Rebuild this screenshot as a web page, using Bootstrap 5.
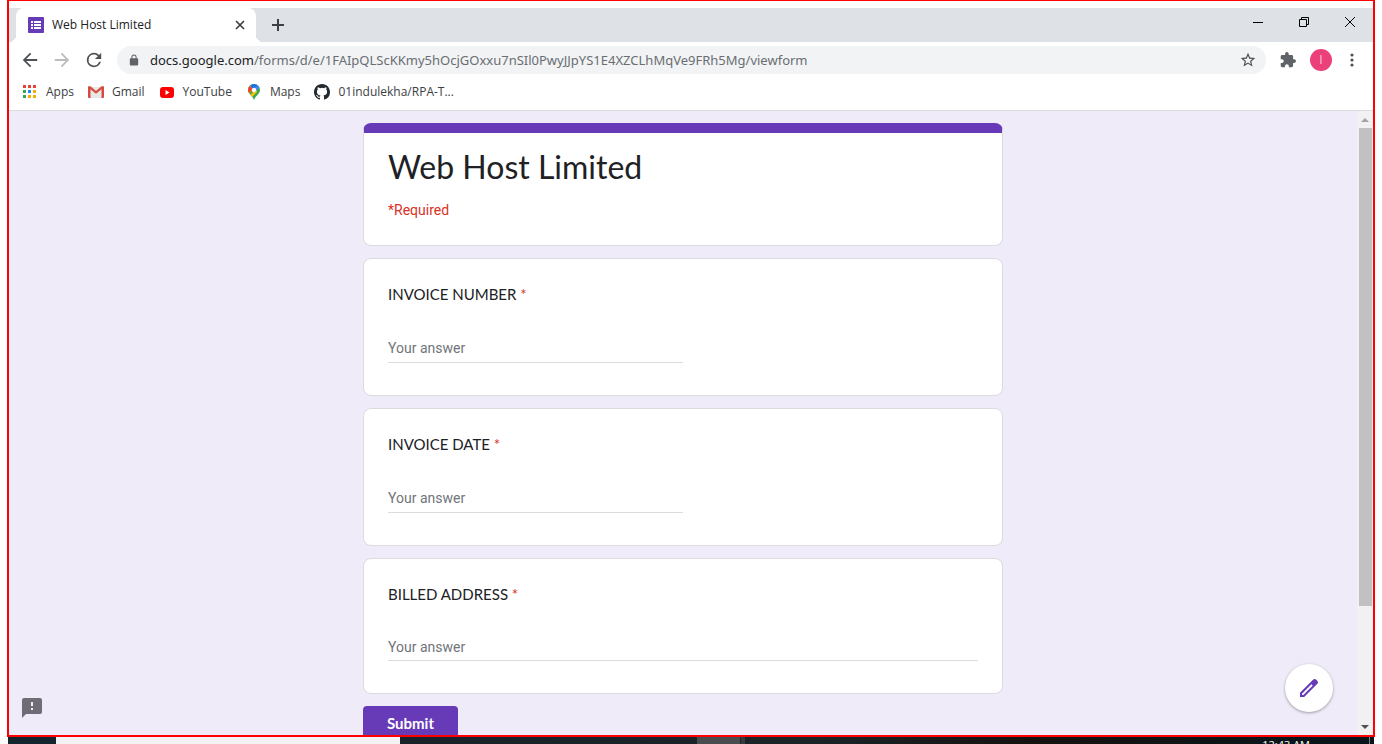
<!DOCTYPE html>
<html lang="en">
<head>
<meta charset="utf-8">
<meta name="viewport" content="width=device-width, initial-scale=1">
<title>Web Host Limited</title>
<link href="https://cdn.jsdelivr.net/npm/bootstrap@5.3.0/dist/css/bootstrap.min.css" rel="stylesheet">
<style>
  :root { --purple: #673ab7; --lavender: #f0ebf8; --strip: #dee1e6; --grey: #5f6368; --ink: #202124; }
  body { font-family: "Open Sans", "Noto Sans", sans-serif; font-size: 12px; line-height: 16px; color: var(--ink); }
  svg { display: block; flex: none; }
  .plain { border: 0; background: none; padding: 0; color: inherit; }
  .window-frame { border: 2px solid #f00; border-top-width: 1px; margin: 0 7px; padding-top: 7px; min-height: 0; }

  .tab-strip { background: var(--strip); height: 34px; padding-left: 7px; }
  .site-tab { position: relative; width: 240px; background: #fff; border-radius: 8px 8px 0 0; padding: 0 10px 0 12px; }
  .site-tab::before, .site-tab::after { content: ""; position: absolute; bottom: 0; width: 7px; height: 7px; }
  .site-tab::before { right: 100%; background: radial-gradient(circle at 0 0, var(--strip) 7px, #fff 7px); }
  .site-tab::after { left: 100%; background: radial-gradient(circle at 100% 0, var(--strip) 7px, #fff 7px); }
  .new-tab { margin-left: 15px; }
  .win-btn { width: 46px; height: 28px; color: #000; }

  .toolbar-row { height: 36px; color: var(--grey); padding: 0 15px 0 12px; gap: 14px; }
  .omnibox { background: #f1f3f4; height: 28px; border-radius: 14px; padding: 0 10px 0 11px; font-family: "Noto Sans", sans-serif; font-size: 13px; line-height: 20px; }
  .omnibox .host { color: var(--ink); margin-left: 10px; }
  .omnibox input { font: inherit; color: #6a6e73; outline: 0; min-width: 0; }
  .avatar-btn { width: 22px; height: 22px; border-radius: 50%; background: #ec407a; color: #fbc9da; }

  .bookmarks { height: 33px; border-bottom: 1px solid #dadce0; padding: 0 14px 4px 13px; gap: 14px; }
  .bookmarks a { color: #3c4043; text-decoration: none; gap: 8px; }

  .page-area { background: var(--lavender); min-height: 0; }
  .form-column { width: 640px; max-width: 100%; gap: 12px; padding-top: 12px; font-family: Roboto, sans-serif; font-size: 14px; line-height: 20px; }
  .form-card { background: #fff; border: 1px solid #dadce0; border-radius: 8px; padding: 24px; flex: none; }
  .title-card { border-top: 10px solid var(--purple); padding: 12px 24px 25px; }
  .title-card h1 { font-family: Lato, sans-serif; font-size: 32px; line-height: 44px; margin: 0 0 11px; }
  .need { color: #d93025; }
  .form-card label { font-family: Lato, sans-serif; font-size: 15px; line-height: 23px; margin-bottom: 32px; }
  .answer { display: block; font-size: 14px; line-height: 20px; padding: 0 0 4px; border: 0; border-bottom: 1px solid #dadce0; border-radius: 0; outline: 0; width: 50%; resize: none; margin-bottom: 8px; background: none; }
  .answer::placeholder { color: #70757a; opacity: 1; }
  textarea.answer { width: 100%; line-height: 18px; }
  .submit-btn { background: var(--purple); color: #fff; font-family: Lato, sans-serif; font-weight: 700; font-size: 15px; line-height: 20px; border: 0; border-radius: 4px; padding: 7px 23px 9px; align-self: flex-start; min-width: 95px; flex: none; }
  .report-btn { position: absolute; left: 11px; bottom: 15px; }
  .edit-btn { position: absolute; right: 40px; bottom: 23px; width: 48px; height: 48px; border-radius: 50%; background: #fff; box-shadow: 0 1px 3px rgba(0,0,0,.35); }
  .scroll-track { width: 16px; background: #f1f1f1; }
  .scroll-end { height: 17px; flex: none; }
  .scroll-thumb { background: #c1c1c1; margin: 0 1px 0 2px; flex: 81; }
  .scroll-rest { flex: 19; }

  .os-bar { height: 7px; margin: 0 8px; background: linear-gradient(90deg, #14242c, #1b2326 60%, #14120f 75%, #07151b); overflow: hidden; padding-left: 48px; }
  .os-search { width: 344px; background: #f2f2f2; }
  .os-task { width: 44px; margin-left: 22.5%; background: #4a4d4f; border-right: 1px solid #222; }
  .os-task-edge { width: 4px; background: #363b3d; }
  .os-clock { color: #fff; font-size: 11px; padding-right: 59px; }
  .os-desk { width: 5px; border-left: 1px solid #7b8286; }
</style>
</head>
<body class="d-flex flex-column vh-100 overflow-hidden bg-white">
<div class="window-frame d-flex flex-column flex-grow-1">

  <header>
    <div class="tab-strip d-flex">
      <div class="site-tab d-flex align-items-center">
        <svg width="16" height="16" viewBox="0 0 16 16"><rect width="16" height="16" rx="1" fill="#673ab7"/><path fill="#fff" d="M3 4h2v2H3zM6 4h7v2H6zM3 7h2v2H3zM6 7h7v2H6zM3 10h2v2H3zM6 10h7v2H6z"/></svg>
        <span class="ms-2 flex-grow-1 text-truncate">Web Host Limited</span>
        <button class="plain" aria-label="Close tab"><svg width="12" height="12" viewBox="0 0 12 12" stroke="#3c4043" stroke-width="1.7"><path d="M2 2l8 8M10 2l-8 8"/></svg></button>
      </div>
      <button class="plain new-tab" aria-label="New tab"><svg width="14" height="14" viewBox="0 0 14 14" stroke="#3c4043" stroke-width="2"><path d="M7 1v12M1 7h12"/></svg></button>
      <div class="ms-auto d-flex">
        <button class="plain win-btn d-flex align-items-center justify-content-center" aria-label="Minimize"><svg width="10" height="10" viewBox="0 0 10 10"><path d="M0 5h10v1H0z"/></svg></button>
        <button class="plain win-btn d-flex align-items-center justify-content-center" aria-label="Restore"><svg width="10" height="10" viewBox="0 0 10 10" fill="none" stroke="#000"><path d="M.5 2.500h7v7h-7zM2.500 2.500v-2h7v7h-2"/></svg></button>
        <button class="plain win-btn d-flex align-items-center justify-content-center" aria-label="Close"><svg width="10" height="10" viewBox="0 0 10 10" stroke="#000"><path d="M0 0l10 10M10 0L0 10"/></svg></button>
      </div>
    </div>

    <div class="toolbar-row d-flex align-items-center">
      <button class="plain" aria-label="Back"><svg width="18" height="18" viewBox="2 2 20 20" fill="#4d5156"><path d="M20 11H7.830l5.590-5.590L12 4l-8 8 8 8 1.410-1.410L7.830 13H20z"/></svg></button>
      <button class="plain" aria-label="Forward"><svg width="18" height="18" viewBox="2 2 20 20" fill="#babcbe"><path d="M4 13h12.170l-5.590 5.590L12 20l8-8-8-8-1.410 1.410L16.170 11H4z"/></svg></button>
      <button class="plain" aria-label="Reload"><svg width="18" height="18" viewBox="2 2 20 20" fill="#4d5156"><path d="M17.650 6.350A7.950 7.950 0 0 0 12 4a8 8 0 1 0 7.730 10h-2.080A6 6 0 1 1 12 6c1.660 0 3.140.69 4.220 1.780L13 11h7V4z"/></svg></button>
      <div class="omnibox d-flex align-items-center flex-grow-1">
        <svg width="12" height="12" viewBox="1 0 22 23" fill="#5f6368"><path d="M18 8h-1V6A5 5 0 0 0 7 6v2H6a2 2 0 0 0-2 2v10c0 1.100.9 2 2 2h12a2 2 0 0 0 2-2V10a2 2 0 0 0-2-2zM8.900 6a3.100 3.100 0 0 1 6.200 0v2H8.900z"/></svg>
        <span class="host">docs.google.com</span><input class="plain flex-grow-1" type="text" aria-label="Address" value="/forms/d/e/1FAIpQLScKKmy5hOcjGOxxu7nSIl0PwyJJpYS1E4XZCLhMqVe9FRh5Mg/viewform">
        <button class="plain" aria-label="Bookmark this page"><svg width="16" height="16" viewBox="1 1 22 22" fill="#4d5156"><path d="M22 9.240l-7.190-.62L12 2 9.190 8.630 2 9.240l5.460 4.730L5.820 21 12 17.270 18.180 21l-1.630-7.030zM12 15.400l-3.760 2.270 1-4.280-3.320-2.880 4.380-.38L12 6.100l1.710 4.040 4.380.38-3.320 2.880 1 4.280z"/></svg></button>
      </div>
      <button class="plain" aria-label="Extensions"><svg width="16" height="16" viewBox="1 1 22 22" fill="#5f6368"><path d="M20.500 11H19V7a2 2 0 0 0-2-2h-4V3.500a2.500 2.500 0 0 0-5 0V5H4a2 2 0 0 0-2 2v3.800h1.500a2.700 2.700 0 0 1 0 5.400H2V20c0 1.100.9 2 2 2h3.800v-1.500a2.700 2.700 0 0 1 5.400 0V22H17a2 2 0 0 0 2-2v-4h1.500a2.500 2.500 0 0 0 0-5z"/></svg></button>
      <button class="plain avatar-btn" aria-label="Account">I</button>
      <button class="plain" aria-label="Menu"><svg width="12" height="16" viewBox="0 0 12 16" fill="#4d5156"><circle cx="6" cy="3" r="1.600"/><circle cx="6" cy="8" r="1.600"/><circle cx="6" cy="13" r="1.600"/></svg></button>
    </div>

    <nav class="bookmarks d-flex align-items-center">
      <a class="d-flex align-items-center" href="#"><svg width="16" height="16" viewBox="0 0 16 16"><path fill="#ea4335" d="M1 1h3v3H1zM6 1h3v3H6zM11 1h3v3h-3z"/><path fill="#34a853" d="M1 6h3v3H1zM1 11h3v3H1z"/><path fill="#1a8cf0" d="M6 6h3v3H6z"/><path fill="#fbab05" d="M11 6h3v3h-3zM6 11h3v3H6zM11 11h3v3h-3z"/></svg>Apps</a>
      <a class="d-flex align-items-center" href="#"><svg width="16" height="16" viewBox="0 0 16 16"><path fill="#e8e8e8" d="M1 3h14v11H1z"/><path fill="#d54b3d" d="M1 2.300h1.500L8 7l5.500-4.700H15c.6 0 1 .4 1 1V13c0 .6-.4 1-1 1h-1.500V5.300L8 9.800 2.500 5.300V14H1c-.6 0-1-.4-1-1V3.300c0-.6.4-1 1-1z"/></svg>Gmail</a>
      <a class="d-flex align-items-center" href="#"><svg width="16" height="16" viewBox="0 0 16 16"><rect x="1" y="3" width="14" height="11" rx="3" fill="#f00"/><path fill="#fff" d="M6.500 6v5l4-2.500z"/></svg>YouTube</a>
      <a class="d-flex align-items-center" href="#"><svg width="16" height="16" viewBox="0 0 16 16"><defs><clipPath id="pin"><path d="M8 0a6 6 0 0 0-6 6c0 4 4.500 5.500 6 10 1.500-4.500 6-6 6-10a6 6 0 0 0-6-6z"/></clipPath></defs><g clip-path="url(#pin)"><path fill="#34a853" d="M0 0h16v16H0z"/><path fill="#fbbc04" d="M0 13L11 1 0 0z M3 12l8-8 0 4-6 6z"/><path fill="#1a73e8" d="M3 0h10L7 6z"/><path fill="#ea4335" d="M0 0l3.500 2L7 5 2 10H0z"/><path fill="#4285f4" d="M9 4l4.500-4L16 3l-3 1-4 4z"/></g><circle cx="8" cy="6" r="2.200" fill="#fff"/></svg>Maps</a>
      <a class="d-flex align-items-center" href="#"><svg width="16" height="16" viewBox="0 0 16 16" fill="#24292e"><path d="M8 0C3.580 0 0 3.580 0 8c0 3.540 2.290 6.530 5.470 7.590.4.070.55-.17.55-.38 0-.19-.01-.82-.01-1.490-2.010.37-2.530-.49-2.690-.94-.09-.23-.48-.94-.82-1.130-.28-.15-.68-.52-.01-.53.63-.01 1.080.58 1.230.82.72 1.210 1.870.87 2.330.66.070-.52.28-.87.51-1.070-1.780-.2-3.640-.89-3.640-3.950 0-.87.31-1.590.82-2.150-.08-.2-.36-1.020.08-2.120 0 0 .67-.21 2.200.82a7.600 7.600 0 0 1 4 0c1.530-1.040 2.200-.82 2.200-.82.44 1.100.16 1.920.08 2.120.51.56.82 1.270.82 2.150 0 3.070-1.870 3.750-3.650 3.950.29.25.54.73.54 1.480 0 1.070-.01 1.930-.01 2.200 0 .21.15.46.55.38A8 8 0 0 0 16 8c0-4.420-3.580-8-8-8z"/></svg>01indulekha/RPA-T...</a>
    </nav>
  </header>

  <main class="page-area d-flex flex-grow-1 position-relative">
    <div class="flex-grow-1 overflow-hidden">
      <form class="form-column d-flex flex-column mx-auto">
        <section class="form-card title-card">
          <h1 class="fw-normal">Web Host Limited</h1>
          <div class="need">*Required</div>
        </section>
        <section class="form-card">
          <label class="d-block" for="number">INVOICE NUMBER <span class="need">*</span></label>
          <input class="answer" id="number" type="text" placeholder="Your answer">
        </section>
        <section class="form-card">
          <label class="d-block" for="date">INVOICE DATE <span class="need">*</span></label>
          <input class="answer" id="date" type="text" placeholder="Your answer">
        </section>
        <section class="form-card">
          <label class="d-block" for="address">BILLED ADDRESS <span class="need">*</span></label>
          <textarea class="answer" id="address" rows="1" placeholder="Your answer"></textarea>
        </section>
        <button class="submit-btn" type="button">Submit</button>
      </form>
    </div>
    <button class="plain report-btn" aria-label="Report a problem"><svg width="24" height="24" viewBox="0 0 24 24" fill="#706c75"><path d="M20 2H4a2 2 0 0 0-2 2v18l4-4h14a2 2 0 0 0 2-2V4a2 2 0 0 0-2-2zm-7 12h-2v-2h2zm0-4h-2V6h2z"/></svg></button>
    <button class="plain edit-btn d-flex align-items-center justify-content-center" aria-label="Edit this form"><svg width="24" height="24" viewBox="0 0 24 24" fill="#673ab7"><path d="M20.410 4.940l-1.350-1.350a2 2 0 0 0-2.830 0L3 16.820V21h4.180L20.410 7.770a2 2 0 0 0 0-2.830zM6.350 19H5v-1.350l9.400-9.390 1.350 1.350z"/></svg></button>
    <div class="scroll-track d-flex flex-column" aria-hidden="true">
      <div class="scroll-end d-flex align-items-center justify-content-center"><svg width="8" height="4" viewBox="0 0 8 4" fill="#a3a3a3"><path d="M0 4l4-4 4 4z"/></svg></div>
      <div class="scroll-thumb"></div>
      <div class="scroll-rest"></div>
      <div class="scroll-end d-flex align-items-center justify-content-center"><svg width="8" height="4" viewBox="0 0 8 4" fill="#505050"><path d="M0 0l4 4 4-4z"/></svg></div>
    </div>
  </main>
</div>

<footer class="os-bar d-flex flex-shrink-0">
  <div class="os-search"></div>
  <div class="os-task"></div>
  <div class="os-task-edge me-auto"></div>
  <div class="os-clock">12:43 AM</div>
  <div class="os-desk"></div>
</footer>
<script src="https://cdn.jsdelivr.net/npm/bootstrap@5.3.0/dist/js/bootstrap.bundle.min.js"></script>
</body>
</html>
